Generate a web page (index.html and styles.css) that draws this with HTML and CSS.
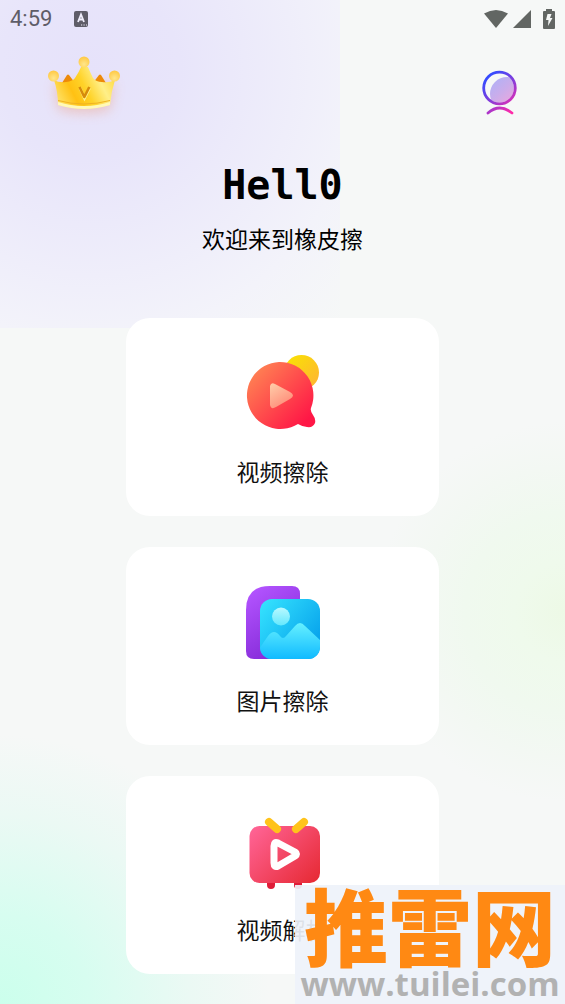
FILE: index.html
```html
<!DOCTYPE html>
<html lang="zh-CN">
<head>
<meta charset="utf-8">
<meta name="viewport" content="width=device-width, initial-scale=1">
<title>橡皮擦</title>
<link rel="stylesheet" href="styles.css">
</head>
<body>
<div class="app">
  <div class="status">
    <div class="status-group status-left">
      <span class="clock">4:59</span>
      <svg width="16" height="18" viewBox="0 0 16 18" aria-hidden="true"><rect x="1" y="1" width="14" height="16" rx="2" fill="#5f5d68"/><path d="M5 12 8 4.500 11 12M6 9.500h4" fill="none" stroke="#f0eefb" stroke-width="1.800"/><path d="M8 15h1.200M10.500 15h1.200M13 15h1" stroke="#f0eefb" stroke-width="1.200"/></svg>
    </div>
    <div class="status-group status-right">
      <svg width="26" height="20" viewBox="0 0 26 20" aria-hidden="true"><path d="M1 4.500Q13-2.500 25 4.500L13 19Z" fill="#626663"/></svg>
      <svg width="18" height="20" viewBox="0 0 18 20" aria-hidden="true"><path d="M18 1v18H0Z" fill="#626663"/></svg>
      <svg class="battery" width="12" height="20" viewBox="0 0 12 20" aria-hidden="true"><path d="M3 0h6v2h2a1 1 0 0 1 1 1v16a1 1 0 0 1-1 1H1a1 1 0 0 1-1-1V3a1 1 0 0 1 1-1h2Z" fill="#626663"/><path d="M4.500 5h4L7 9h2.500L5 17l.5-6H3Z" fill="#f6f8f7"/></svg>
    </div>
  </div>

  <header class="topbar">
    <button class="icon-button" type="button" aria-label="会员">
      <svg width="88" height="76" viewBox="0 0 88 76" aria-hidden="true">
        <defs>
          <linearGradient id="crown" x1="0" y1=".7" x2="1" y2=".35"><stop offset="0" stop-color="#ffe46b"/><stop offset=".3" stop-color="#ffc113"/><stop offset=".52" stop-color="#ffd329"/><stop offset=".78" stop-color="#ffef88"/><stop offset="1" stop-color="#ffdc4b"/></linearGradient>
          <radialGradient id="ball" cx=".5" cy=".7" r=".7"><stop offset="0" stop-color="#ffe68b"/><stop offset="1" stop-color="#ffc842"/></radialGradient>
          <filter id="soft" x="-30%" y="-60%" width="160%" height="250%"><feGaussianBlur stdDeviation="6"/></filter>
        </defs>
        <path d="M14 34Q44 30 75 34L70 60Q44 67 18 60Z" fill="#ef9a78" opacity=".4" filter="url(#soft)"/>
        <path d="m22 33 5-8q1-1 2 0l6 8Zm31 0 6-8q1-1 2 0l5 8Z" fill="#ed8a08"/>
        <path d="M14 30q5 3 12 2 7-1 9-4Q39 22 41 17h7q2 5 5 11 3 4 9 4 7 1 13-2-4 12-5 25-26 7-52 0Q18 42 14 30Z" fill="url(#crown)"/>
        <path d="M18 52q26 8 52 0v3q-26 8-52 0Z" fill="#fff9b8"/><path d="M18 50.500q26 7 52 0" fill="none" stroke="#f1b322"/>
        <path d="m40 38 4.500 10 5-10" fill="none" stroke="#fff08b" stroke-width="3"/><path d="m39.500 37 4.800 10 5-10" fill="none" stroke="#d68b0b" stroke-width="2.600" stroke-linejoin="round"/>
        <circle cx="44" cy="12" r="5.500" fill="url(#ball)"/><circle cx="13.500" cy="26" r="5.500" fill="url(#ball)"/><circle cx="74.500" cy="26" r="5.500" fill="url(#ball)"/>
      </svg>
    </button>
    <button class="icon-button" type="button" aria-label="个人中心">
      <svg width="36" height="46" viewBox="0 0 36 46" aria-hidden="true">
        <defs><linearGradient id="user" gradientUnits="userSpaceOnUse" x1="4" y1="8" x2="32" y2="40"><stop stop-color="#344bff"/><stop offset=".5" stop-color="#8b3bd7"/><stop offset="1" stop-color="#ff2ba8"/></linearGradient><clipPath id="face"><circle cx="17.500" cy="18" r="14.500"/></clipPath></defs>
        <g clip-path="url(#face)"><circle cx="25" cy="24" r="17" fill="url(#user)" opacity=".4"/></g>
        <circle cx="17.500" cy="18" r="15.800" fill="none" stroke="url(#user)" stroke-width="2.800"/><path d="M6 43q11.500-10 24 0" fill="none" stroke="url(#user)" stroke-width="2.800" stroke-linecap="round"/>
      </svg>
    </button>
  </header>

  <main class="content">
    <h1 class="hello">Hell0</h1>
    <p class="welcome">欢迎来到橡皮擦</p>
    <div class="cards">
      <button class="card" type="button">
        <svg width="82" height="80" viewBox="0 0 82 80" aria-hidden="true">
          <defs><linearGradient id="bubble" x1=".1" y1=".1" x2=".9" y2=".85"><stop stop-color="#ff8353"/><stop offset="1" stop-color="#ff1746"/></linearGradient><linearGradient id="sun" x1="0" y1="0" x2="1" y2="1"><stop stop-color="#f9e500"/><stop offset="1" stop-color="#ffb136"/></linearGradient><linearGradient id="play" x1="0" y1="0" x2=".6" y2="1"><stop stop-color="#ffceaa"/><stop offset="1" stop-color="#ff8b78"/></linearGradient></defs>
          <circle cx="59.500" cy="20.500" r="17.500" fill="url(#sun)"/>
          <path d="M37 10A33.500 33.500 0 0 1 69 56q-1 3 2 7 3 4 2 8-2 5-8 4-4 0-9-3A33.500 33.500 0 1 1 37 10Z" fill="url(#bubble)"/>
          <path d="M28 34q1-4 5-2l15 8q6 3.500 0 7l-14 8q-5 3-6-2Z" fill="url(#play)"/>
        </svg>
        <span>视频擦除</span>
      </button>
      <button class="card" type="button">
        <svg width="82" height="80" viewBox="0 0 82 80" aria-hidden="true">
          <defs><linearGradient id="purple" x1=".2" y1="0" x2=".7" y2="1"><stop stop-color="#b354ff"/><stop offset="1" stop-color="#8127d4"/></linearGradient><linearGradient id="blue" x1="0" y1="0" x2="1" y2=".8"><stop stop-color="#37e5ff"/><stop offset="1" stop-color="#049eea"/></linearGradient><linearGradient id="hill" x1="0" y1="0" x2="0" y2="1"><stop stop-color="#65f0ff"/><stop offset="1" stop-color="#09b6ff"/></linearGradient><linearGradient id="moon" x1="0" y1="0" x2="0" y2="1"><stop stop-color="#b9f9ff"/><stop offset="1" stop-color="#65e8fd"/></linearGradient><clipPath id="photo"><rect x="18" y="18" width="60" height="60" rx="12"/></clipPath></defs>
          <path d="M28 5h22q8 0 8 8v65H12q-8 0-8-8V29Q4 5 28 5Z" fill="url(#purple)"/><path d="M58 18h22v62H58Z" fill="#fff"/>
          <rect x="18" y="18" width="60" height="60" rx="12" fill="url(#blue)"/><g clip-path="url(#photo)"><path d="M16 70q5-8 10-15 6-8 12 0 3 4 6 0l9-10q5-6 10 0l17 16v20H16Z" fill="url(#hill)"/></g><circle cx="39" cy="35.500" r="9" fill="url(#moon)"/>
        </svg>
        <span>图片擦除</span>
      </button>
      <button class="card" type="button">
        <svg width="82" height="80" viewBox="0 0 82 80" aria-hidden="true">
          <defs><linearGradient id="tv" x1="0" y1=".1" x2="1" y2=".9"><stop stop-color="#ff6394"/><stop offset="1" stop-color="#e72b36"/></linearGradient></defs>
          <path d="M29 67v8m27-8v8" stroke="#df1c38" stroke-width="8" stroke-linecap="round"/><rect x="7.500" y="16" width="70.500" height="57" rx="10" fill="url(#tv)"/>
          <path d="m27 12 8 7m27-7-8 7" stroke="#ffc31b" stroke-width="8" stroke-linecap="round"/>
          <path d="M32 36q0-5 4-3l17 9q3 2 0 4l-17 10q-4 2-4-3Z" fill="none" stroke="#fff" stroke-width="7" stroke-linejoin="round"/>
        </svg>
        <span>视频解析</span>
      </button>
    </div>
  </main>

  <aside class="watermark"><span class="mark-name">推雷网</span><span class="mark-url">www.tuilei.com</span></aside>
</div>
</body>
</html>
```
FILE: styles.css
```css
* { box-sizing: border-box; }
body { margin: 0; font-family: Roboto, "Noto Sans CJK SC", sans-serif; color: #111; }
.app {
  position: relative;
  min-height: 100vh;
  overflow: hidden;
  padding-bottom: 31px;
  background:
    radial-gradient(circle at 90px 70px, #e6e2fa 0, #e8e5fa 90px, #f3f3fa 270px, #f6f8f7 360px) 0 0 / 340px 328px no-repeat,
    radial-gradient(circle 270px at 0 100%, #cbffec 0, #d7fdf0 90px, #ebf9f4 190px, rgba(246, 248, 247, 0) 270px),
    radial-gradient(circle 190px at 100% 612px, #edf9e6 0, #effaec 50px, #f0f9ef 100px, #f3f8f3 145px, rgba(246, 248, 247, 0) 190px),
    #f6f8f7;
}
.status { display: flex; justify-content: space-between; align-items: center; height: 38px; padding: 0 10px; }
.status-group { display: flex; align-items: center; }
.status-left { gap: 21px; }
.status-right { gap: 4px; }
.clock { font-size: 22px; line-height: 26px; color: #5f5d68; }
.battery { margin-left: 8px; }
.topbar { display: flex; justify-content: space-between; align-items: flex-end; padding: 12px 47px 0 40px; }
.icon-button { display: block; padding: 0; border: 0; background: none; }
.icon-button + .icon-button { padding-bottom: 10px; }
.icon-button svg, .card svg { display: block; }
.content { display: flex; flex-direction: column; align-items: center; padding-top: 35px; }
.hello { margin: 0; font: bold 40px/48px "DejaVu Sans Mono", monospace; color: #000; }
.welcome { margin: 14px 0 0; font-size: 23px; line-height: 36px; color: #000; }
.cards { display: grid; gap: 31px; width: calc(100% * 5 / 9); max-width: 420px; margin-top: 59px; }
.card {
  display: flex;
  flex-direction: column;
  align-items: center;
  gap: 24px;
  padding: 34px 0 24px;
  border: 0;
  border-radius: 24px;
  background: #fff;
  color: #111;
  font: 23px/36px Roboto, "Noto Sans CJK SC", sans-serif;
}
.watermark {
  position: absolute;
  right: 0;
  bottom: 0;
  display: flex;
  flex-direction: column;
  align-items: center;
  width: 270px;
  height: 120px;
  background: rgba(238, 242, 250, .92);
}
.mark-name { font: 900 84px/78px "Noto Sans CJK SC", sans-serif; color: #ff8913; }
.mark-url { font: bold 33px/42px "Open Sans", sans-serif; color: #b2b2b2; }
```
